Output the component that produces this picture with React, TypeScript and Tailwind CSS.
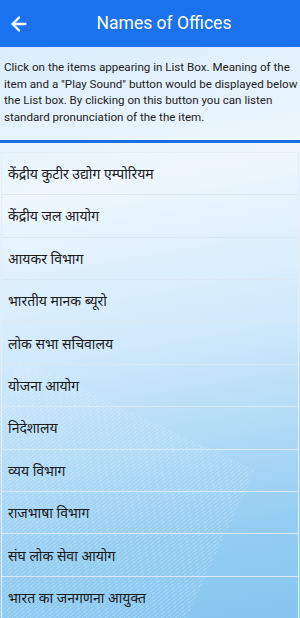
import { ArrowLeft } from "lucide-react";

const offices = [
  "केंद्रीय कुटीर उद्योग एम्पोरियम",
  "केंद्रीय जल आयोग",
  "आयकर विभाग",
  "भारतीय मानक ब्यूरो",
  "लोक सभा सचिवालय",
  "योजना आयोग",
  "निदेशालय",
  "व्यय विभाग",
  "राजभाषा विभाग",
  "संघ लोक सेवा आयोग",
  "भारत का जनगणना आयुक्त",
];

const intro = [
  "Click on the items appearing in List Box. Meaning of the",
  'item and a "Play Sound" button would be displayed below',
  "the List box. By clicking on this button you can listen",
  "standard pronunciation of the the item.",
];

export default function App() {
  return (
    <div className="relative w-[300px] h-[618px] overflow-hidden bg-[linear-gradient(170deg,#d4eafa_0%,#eef7fe_30%,#d0e9fb_55%,#94cdf2_85%,#86c5ef_100%)] font-['Roboto',sans-serif]">
      {/* diagonal streaks in the backdrop */}
      <div className="pointer-events-none absolute left-[-60px] top-[400px] w-[260px] h-[320px] rotate-[25deg] opacity-60 bg-[repeating-linear-gradient(115deg,rgba(255,255,255,0.3)_0px,rgba(255,255,255,0.3)_1px,transparent_1px,transparent_3px)]" />

      <div className="relative flex flex-col">
        <header className="flex items-center h-[47px] bg-[#1a72ee] px-2">
          <ArrowLeft className="w-[22px] h-[22px] text-white" strokeWidth={2.5} />
          <h1 className="flex-1 text-center text-white text-[17.5px] pl-[6px]">
            Names of Offices
          </h1>
        </header>

        <div className="px-[4px] pt-[12px] pb-[14px] text-[11.6px] leading-[16.7px] text-[#1d1d1d] whitespace-nowrap">
          {intro.map((line) => (
            <div key={line}>{line}</div>
          ))}
        </div>

        <div className="h-[3px] bg-[#1a6fdc]" />

        <ul className="mt-[9px] mx-[1px] border border-[#e4eef6] border-b-0">
          {offices.map((name) => (
            <li
              key={name}
              className="h-[42.4px] flex items-center px-[6px] border-b border-[#dce8f1] text-[14px] text-[#1a1a1a] font-['Noto_Sans','Lohit_Devanagari',sans-serif]"
            >
              {name}
            </li>
          ))}
        </ul>
      </div>
    </div>
  );
}
